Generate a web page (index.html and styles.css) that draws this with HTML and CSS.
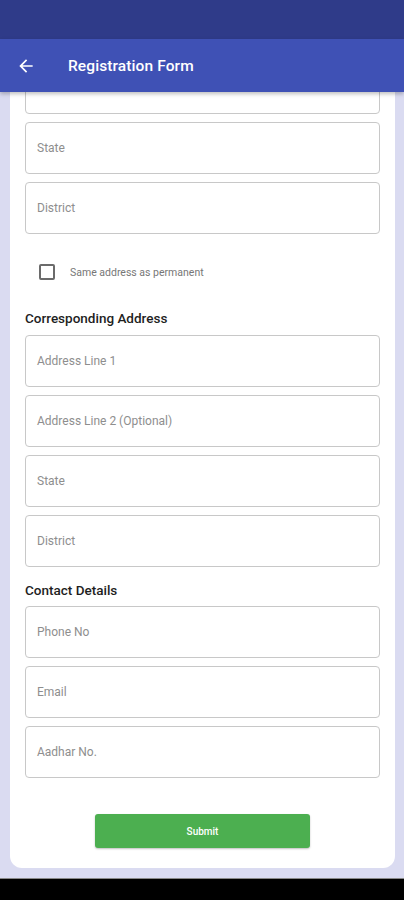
FILE: index.html
```html
<!DOCTYPE html>
<html>
<head>
<meta charset="utf-8">
<link rel="stylesheet" href="styles.css">
</head>
<body>
<div class="screen">
  <div class="status-bar"></div>
  <div class="app-bar">
    <svg class="back" width="20" height="20" viewBox="0 0 24 24"><path d="M20 11H7.83l5.59-5.59L12 4l-8 8 8 8 1.41-1.41L7.83 13H20v-2z" fill="#fff"/></svg>
    <div class="title">Registration Form</div>
  </div>
  <div class="content">
    <div class="card">
      <div class="field"></div>
      <div class="field"><span class="ph">State</span></div>
      <div class="field"><span class="ph">District</span></div>
      <div class="check-row">
        <span class="checkbox"></span>
        <span class="check-label">Same address as permanent</span>
      </div>
      <div class="heading">Corresponding Address</div>
      <div class="field"><span class="ph">Address Line 1</span></div>
      <div class="field"><span class="ph">Address Line 2 (Optional)</span></div>
      <div class="field"><span class="ph">State</span></div>
      <div class="field"><span class="ph">District</span></div>
      <div class="heading heading2">Contact Details</div>
      <div class="field"><span class="ph">Phone No</span></div>
      <div class="field"><span class="ph">Email</span></div>
      <div class="field"><span class="ph">Aadhar No.</span></div>
      <div class="btn-row"><div class="submit">Submit</div></div>
    </div>
  </div>
  <div class="nav-bar"></div>
</div>
</body>
</html>
```
FILE: styles.css
```css
* { box-sizing: border-box; }
html, body { margin: 0; padding: 0; }
body { font-family: Roboto, "Noto Sans", Arial, sans-serif; background: #000; }
.screen { width: 404px; height: 900px; display: flex; flex-direction: column; overflow: hidden; }
.status-bar { height: 39px; background: #2f3b89; flex: none; }
.app-bar { height: 53px; background: #3f51b5; flex: none; display: flex; align-items: center; padding-left: 16px; position: relative; z-index: 2; box-shadow: 0 2px 4px rgba(0,0,0,0.25); }
.back { display: block; }
.title { color: #fff; font-size: 15.5px; font-weight: 500; margin-left: 32px; letter-spacing: 0.1px; }
.content { flex: 1; background: #dadbf1; overflow: hidden; padding: 0 9px 10px 10px; display: flex; flex-direction: column; justify-content: flex-end; }
.card { background: #fff; border-radius: 12px; padding: 10px 15px 20px 15px; display: flex; flex-direction: column; }
.field { height: 52px; border: 1px solid #c8c8c8; border-radius: 4px; display: flex; align-items: center; padding-left: 11px; margin-bottom: 8px; }
.ph { font-size: 12px; color: #8e8e8e; }
.check-row { height: 48px; margin-top: 6px; display: flex; align-items: center; padding-left: 14px; }
.checkbox { width: 16px; height: 16px; border: 2px solid #6b6b6b; border-radius: 2px; flex: none; }
.check-label { font-size: 10.5px; color: #777; margin-left: 15px; }
.heading { font-size: 13.5px; font-weight: 500; color: #1e1e1e; line-height: 20px; margin-top: 12px; margin-bottom: 7px; }
.heading2 { margin-top: 5px; margin-bottom: 6px; }
.btn-row { display: flex; justify-content: center; margin-top: 28px; }
.submit { width: 215px; height: 34px; background: #4caf50; border-radius: 3px; color: #fff; font-size: 10px; font-weight: 500; display: flex; align-items: center; justify-content: center; box-shadow: 0 1px 2px rgba(0,0,0,0.25); }
.nav-bar { height: 22px; background: #000; flex: none; border-top: 1px solid #888; }
```
